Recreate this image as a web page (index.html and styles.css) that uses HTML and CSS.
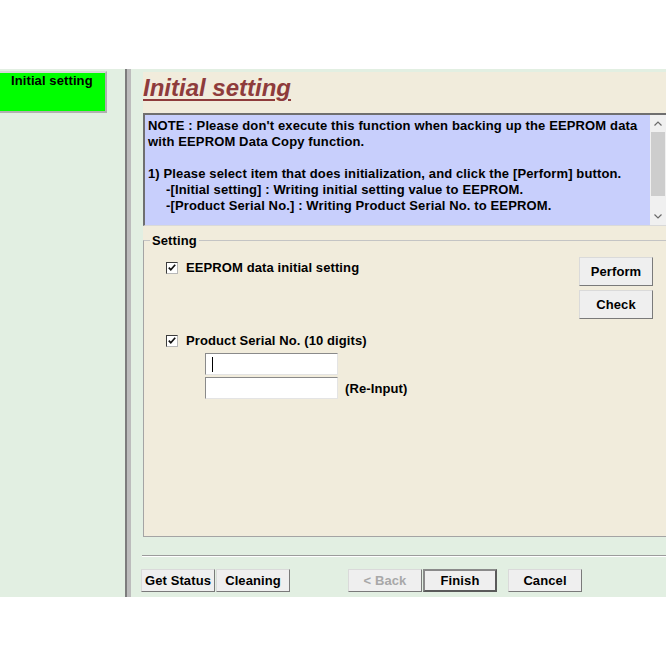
FILE: index.html
```html
<!DOCTYPE html>
<html lang="en">
  <head>
    <meta charset="UTF-8" />
    <title>Initial setting</title>
    <link rel="stylesheet" href="styles.css">
  </head>
  <body>
    <div class="window">
      <aside class="sidebar">
        <div class="navItem">Initial setting</div>
      </aside>
      <div class="splitter"></div>
      <main class="main">
        <section class="panel">
          <h1 class="title">Initial setting</h1>
          <div class="info">
            <div class="infoText">
              <p class="note">NOTE : Please don't execute this function when backing up the EEPROM data<br>with EEPROM Data Copy function.</p>
              <p>1) Please select item that does initialization, and click the [Perform] button.</p>
              <p class="indent">-[Initial setting] : Writing initial setting value to EEPROM.</p>
              <p class="indent">-[Product Serial No.] : Writing Product Serial No. to EEPROM.</p>
            </div>
            <div class="scrollbar">
              <span class="arrow">
                <svg width="8" height="5" viewBox="0 0 8 5"><polyline points="0.5,4.5 4,1 7.5,4.5" fill="none" stroke="#6a6a6a" stroke-width="1.2"/></svg>
              </span>
              <span class="thumb"></span>
              <span class="track"></span>
              <span class="arrow">
                <svg width="8" height="5" viewBox="0 0 8 5"><polyline points="0.5,0.5 4,4 7.5,0.5" fill="none" stroke="#6a6a6a" stroke-width="1.2"/></svg>
              </span>
            </div>
          </div>
          <fieldset class="setting">
            <legend>Setting</legend>
            <div class="settingBody">
              <div class="options">
                <div class="checkRow">
                  <span class="checkbox">
                    <svg width="10" height="10" viewBox="0 0 10 10"><path d="M1.8 4.6l2 2.2 4.4-5" fill="none" stroke="#111" stroke-width="1.7"/></svg>
                  </span>
                  EEPROM data initial setting
                </div>
                <div class="checkRow serial">
                  <span class="checkbox">
                    <svg width="10" height="10" viewBox="0 0 10 10"><path d="M1.8 4.6l2 2.2 4.4-5" fill="none" stroke="#111" stroke-width="1.7"/></svg>
                  </span>
                  Product Serial No. (10 digits)
                </div>
                <div class="serialInputs">
                  <div class="inputRow"><span class="textbox focused"></span></div>
                  <div class="inputRow"><span class="textbox"></span><span class="reInput">(Re-Input)</span></div>
                </div>
              </div>
              <div class="actions">
                <button class="btn tall">Perform</button>
                <button class="btn tall">Check</button>
              </div>
            </div>
          </fieldset>
        </section>
        <div class="separator"></div>
        <div class="footer">
          <button class="btn">Get Status</button>
          <button class="btn">Cleaning</button>
          <button class="btn back" disabled>&lt; Back</button>
          <button class="btn default">Finish</button>
          <button class="btn cancel">Cancel</button>
        </div>
      </main>
    </div>
  </body>
</html>
```

FILE: styles.css
```css
body {
  margin: 0;
  background-color: #ffffff;
  font: bold 13px "Liberation Sans", Arial, sans-serif;
  letter-spacing: 0.1px;
  color: #000000;
}

.window {
  margin-top: 69px;
  height: 528px;
  display: flex;
  background-color: #e2efe2;
  overflow: hidden;
}

.sidebar {
  width: 125px;
  flex-shrink: 0;
}

.navItem {
  width: 107px;
  height: 42px;
  margin-top: 2px;
  box-sizing: border-box;
  background-color: #00ff00;
  border: 2px solid #d8d8d8;
  border-left: none;
  border-right-color: #b0b0b0;
  border-bottom-color: #b0b0b0;
  padding-left: 11px;
  line-height: 15px;
}

.splitter {
  width: 4px;
  flex-shrink: 0;
  border-left: 2px solid #7c7c7c;
  background-color: #bcbcbc;
}

.main {
  flex: 1;
  display: flex;
  flex-direction: column;
  padding-left: 10px;
  min-width: 0;
}

.panel {
  margin: 3px 0 0 2px;
  height: 465px;
  display: flex;
  flex-direction: column;
  background-color: #f1ecdc;
}

.title {
  margin: 0;
  height: 41px;
  box-sizing: border-box;
  padding-top: 2px;
  font: italic bold 24px "Liberation Sans", Arial, sans-serif;
  letter-spacing: 0;
  line-height: 28px;
  color: #8e3b3b;
  text-decoration: underline;
  text-decoration-thickness: 2px;
  text-underline-offset: 3px;
}

.info {
  height: 113px;
  box-sizing: border-box;
  display: flex;
  background-color: #c8cffc;
  border-style: solid;
  border-width: 2px 0 1px 2px;
  border-color: #6f6f6f #d9d9d9 #d9d9d9 #6f6f6f;
}

.infoText {
  flex: 1;
  padding: 3px 0 0 3px;
  line-height: 16px;
  letter-spacing: 0.13px;
  white-space: nowrap;
}

.infoText p {
  margin: 0;
}

.infoText .note {
  margin-bottom: 16px;
}

.indent {
  padding-left: 18px;
}

.scrollbar {
  width: 16px;
  display: flex;
  flex-direction: column;
  background-color: #f0f0f0;
}

.arrow {
  height: 17px;
  display: flex;
  align-items: center;
  justify-content: center;
}

.thumb {
  height: 64px;
  margin: 0 1px;
  background-color: #cdcdcd;
}

.track {
  flex: 1;
}

.setting {
  flex: 1;
  min-height: 0;
  margin: 7px 0 0;
  padding: 0;
  border: 1px solid #a4a4a4;
  border-top-color: #c4c4c4;
  border-right: none;
}

.setting legend {
  margin-left: 6px;
  padding: 0 2px;
  line-height: 15px;
}

.settingBody {
  display: flex;
  justify-content: space-between;
}

.options {
  padding: 12px 0 0 22px;
}

.checkRow {
  display: flex;
  align-items: center;
  line-height: 15px;
}

.checkbox {
  width: 12px;
  height: 12px;
  box-sizing: border-box;
  margin-right: 8px;
  display: flex;
  align-items: center;
  justify-content: center;
  background-color: #ffffff;
  border: 1px solid #3c3c3c;
  border-right-color: #b8b8b8;
  border-bottom-color: #b8b8b8;
}

.serial {
  margin-top: 58px;
}

.serialInputs {
  margin-top: 5px;
  padding-left: 39px;
}

.inputRow {
  display: flex;
  align-items: center;
}

.inputRow + .inputRow {
  margin-top: 2px;
}

.textbox {
  position: relative;
  width: 133px;
  height: 22px;
  box-sizing: border-box;
  background-color: #ffffff;
  border: 1px solid #8a8a8a;
  border-right-color: #e4e4e4;
  border-bottom-color: #e4e4e4;
}

.focused::before {
  content: "";
  position: absolute;
  left: 6px;
  top: 3px;
  width: 1px;
  height: 15px;
  background-color: #000000;
}

.reInput {
  margin-left: 7px;
}

.actions {
  padding: 9px 13px 0 0;
  display: flex;
  flex-direction: column;
  gap: 4px;
}

.btn {
  width: 74px;
  height: 23px;
  padding: 0;
  box-sizing: border-box;
  font: bold 13px "Liberation Sans", Arial, sans-serif;
  letter-spacing: 0.1px;
  color: #000000;
  background-color: #efefef;
  border: 1px solid #dadada;
  border-right-color: #7a7a7a;
  border-bottom-color: #7a7a7a;
}

.btn.tall {
  height: 29px;
}

.btn:disabled {
  color: #a8a8a8;
}

.footer {
  margin-top: 12px;
  display: flex;
  gap: 1px;
}

.footer .btn.back {
  margin-left: 57px;
}

.footer .btn.default {
  border: 2px solid #5a5a5a;
  border-top-color: #8a8a8a;
  border-left-color: #8a8a8a;
}

.footer .btn.cancel {
  margin-left: 10px;
}

.separator {
  margin-top: 18px;
  height: 0;
  border-top: 1px solid #9c9c9c;
  border-bottom: 1px solid #ffffff;
  margin-left: 1px;
}
```
